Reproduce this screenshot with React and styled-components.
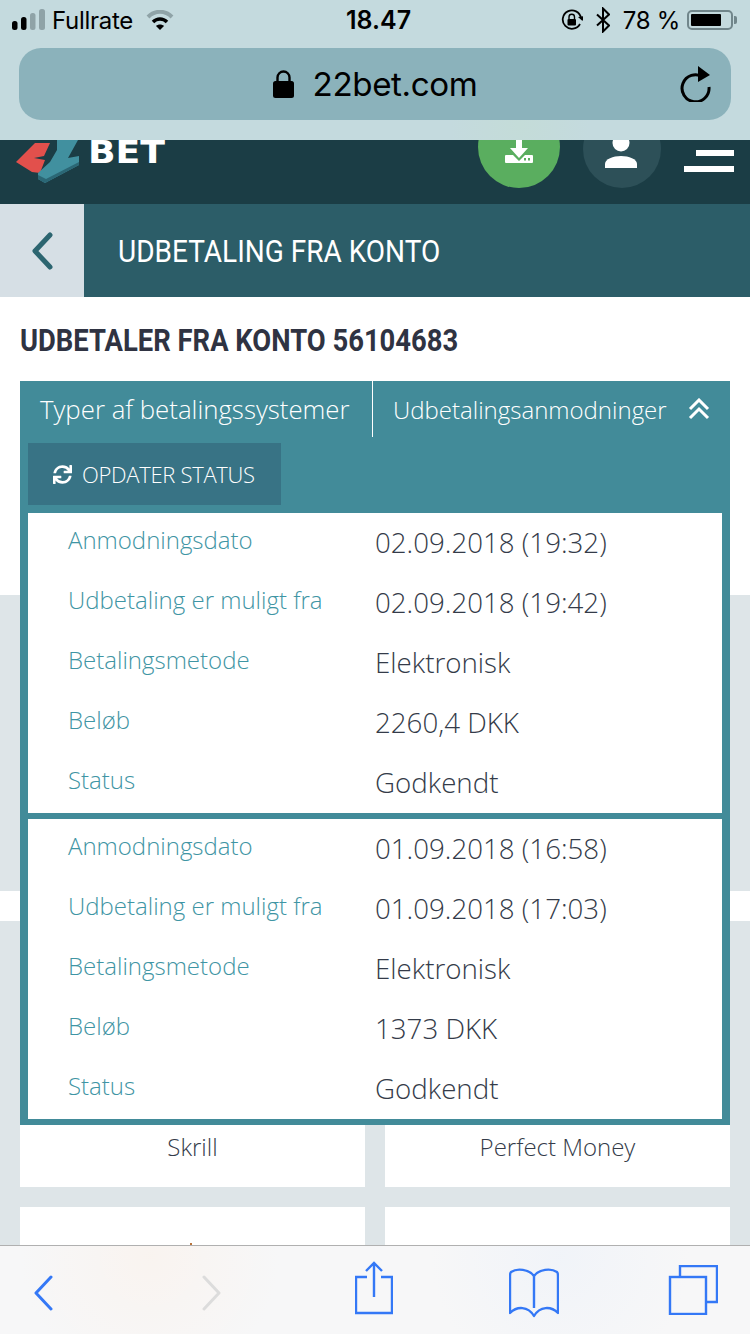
import React from 'react'
import styled, { createGlobalStyle } from 'styled-components'
import { FaSync } from 'react-icons/fa'

const requests = [
  [
    ['Anmodningsdato', '02.09.2018 (19:32)'],
    ['Udbetaling er muligt fra', '02.09.2018 (19:42)'],
    ['Betalingsmetode', 'Elektronisk'],
    ['Beløb', '2260,4 DKK'],
    ['Status', 'Godkendt'],
  ],
  [
    ['Anmodningsdato', '01.09.2018 (16:58)'],
    ['Udbetaling er muligt fra', '01.09.2018 (17:03)'],
    ['Betalingsmetode', 'Elektronisk'],
    ['Beløb', '1373 DKK'],
    ['Status', 'Godkendt'],
  ],
]

const App = () => {
  return (
    <Page>
      <GlobalStyle />
      <Chrome>
        <StatusBar>
          <StatusLeft>
            <svg width="34" height="22" viewBox="0 0 34 22">
              <rect x="0" y="12" width="5.5" height="9" rx="2.5" fill="#000" />
              <rect x="9" y="8" width="5.5" height="13" rx="2.5" fill="#000" />
              <rect x="18" y="4" width="5.5" height="17" rx="2.5" fill="#8fa3a7" />
              <rect x="27" y="0" width="6" height="21" rx="2.5" fill="#8fa3a7" />
            </svg>
            <StatusText>Fullrate</StatusText>
            <WifiIcon width="28" height="20" viewBox="0 0 28 20">
              <path d="M2 7 C9 0 19 0 26 7" fill="none" stroke="#8fa3a7" strokeWidth="4" />
              <path d="M7 12 C11 8 17 8 21 12" fill="none" stroke="#000" strokeWidth="3.5" />
              <path d="M10 16 L14 20 L18 16 C16 14 12 14 10 16 Z" fill="#000" />
            </WifiIcon>
          </StatusLeft>
          <Clock>18.47</Clock>
          <StatusRight>
            <svg width="22" height="22" viewBox="0 0 22 22">
              <path d="M19 15 A9.2 9.2 0 1 1 20 9" fill="none" stroke="#000" strokeWidth="1.8" />
              <path d="M17 8 L21.5 12 L23 7 Z" fill="#000" />
              <rect x="6.5" y="10" width="8.5" height="6.5" rx="1" fill="#000" />
              <path d="M8 10 V8 A2.7 2.7 0 0 1 13.5 8 V10" fill="none" stroke="#000" strokeWidth="1.4" />
            </svg>
            <svg width="14" height="26" viewBox="0 0 14 26">
              <path d="M1 7.5 L13 18.5 L7 24.5 V1.5 L13 7.5 L1 18.5" fill="none" stroke="#000" strokeWidth="2" />
            </svg>
            <StatusText>78 %</StatusText>
            <Battery>
              <BatteryFill />
            </Battery>
          </StatusRight>
        </StatusBar>
        <UrlBar>
          <svg width="21" height="28" viewBox="0 0 21 28">
            <path d="M4.5 13 V7.5 A6 6 0 0 1 16.5 7.5 V13" fill="none" stroke="#000" strokeWidth="2.4" />
            <rect x="0" y="11" width="21" height="17" rx="2.5" fill="#000" />
          </svg>
          <UrlText>22bet.com</UrlText>
          <ReloadIcon width="32" height="36" viewBox="0 0 32 36">
            <path d="M23 10 A13.5 13.5 0 1 0 29 20" fill="none" stroke="#000" strokeWidth="3" transform="translate(0 1)" />
            <path d="M18 0 L30 9 L18 16 Z" fill="#000" />
          </ReloadIcon>
        </UrlBar>
      </Chrome>

      <Header>
        <Logo width="160" height="70" viewBox="10 113 160 70">
          <path d="M16 162 L35 143 L50 143 L44 156 L34 158 L45 160 L40 173 L32 172 Z" fill="#e2504c" />
          <path d="M57 140 L78 140 L68 158 L79 156 L79 165 L45 183 L38 179 L38 173 L50 162 L57 150 Z" fill="#41909f" />
          <path d="M38 175 L46 179 L79 162 L79 165 L45 183 L38 179 Z" fill="#2b6775" />
          <text x="88" y="163" fontFamily="'DejaVu Sans', sans-serif" fontWeight="700" fontSize="32" fill="#fff" textLength="77" lengthAdjust="spacingAndGlyphs">BET</text>
        </Logo>
        <RoundButton $size={82} $bg="#5aae5f" $top={32}>
          <svg width="28" height="34" viewBox="0 0 28 34">
            <path d="M11 0 H17 V10 H23 L14 20 L5 10 H11 Z" fill="#fff" />
            <path d="M1 17 H8 L14 23 L20 17 H27 Q28 17 28 18 V24 Q28 25 27 25 H1 Q0 25 0 24 V18 Q0 17 1 17 Z" fill="#fff" />
            <rect x="19" y="20" width="2" height="2.5" fill="#5aae5f" />
            <rect x="23" y="20" width="2" height="2.5" fill="#5aae5f" />
          </svg>
        </RoundButton>
        <RoundButton $size={78} $bg="#2d5058" $gap={23} $top={25}>
          <UserIcon width="32" height="36" viewBox="0 0 32 36">
            <circle cx="16" cy="8" r="8.5" fill="#fff" />
            <path d="M0 33 V29 C0 24 8 21 16 21 C24 21 32 24 32 29 V33 Z" fill="#fff" />
          </UserIcon>
        </RoundButton>
        <Burger>
          <BurgerLine $width={38} />
          <BurgerLine $width={50} />
        </Burger>
      </Header>

      <TitleBar>
        <BackBox>
          <svg width="24" height="38" viewBox="0 0 24 38">
            <path d="M20 3 L5 19 L20 35" fill="none" stroke="#2c6570" strokeWidth="5" strokeLinecap="round" strokeLinejoin="round" />
          </svg>
        </BackBox>
        <TitleText>UDBETALING FRA KONTO</TitleText>
      </TitleBar>

      <Section>
        <Heading>UDBETALER FRA KONTO 56104683</Heading>
        <Panel>
          <Tabs>
            <TabFirst>Typer af betalingssystemer</TabFirst>
            <TabSecond>
              <span>Udbetalingsanmodninger</span>
              <svg width="22" height="22" viewBox="0 0 22 22">
                <path d="M2 11 L11 2 L20 11 M2 20 L11 11 L20 20" fill="none" stroke="#fff" strokeWidth="3" />
              </svg>
            </TabSecond>
          </Tabs>
          <RefreshButton>
            <FaSync size={19} />
            OPDATER STATUS
          </RefreshButton>
          {requests.map((request, i) => (
            <RequestBox key={i}>
              {request.map(([label, value]) => (
                <Row key={label}>
                  <Label>{label}</Label>
                  <Value>{value}</Value>
                </Row>
              ))}
            </RequestBox>
          ))}
        </Panel>
      </Section>

      <GreyBand />
      <WhiteGap />

      <CardGrid>
        <Card>Skrill</Card>
        <Card>Perfect Money</Card>
        <Card $low>
          <Speck />
        </Card>
        <Card $low />
      </CardGrid>

      <Toolbar>
        <ToolIcon width="20" height="36" viewBox="0 0 20 36" $left={33} $top={29}>
          <path d="M18 2 L3 18 L18 34" fill="none" stroke="#3478f6" strokeWidth="3" strokeLinecap="round" strokeLinejoin="round" />
        </ToolIcon>
        <ToolIcon width="20" height="36" viewBox="0 0 20 36" $left={149} $top={29}>
          <path d="M2 2 L17 18 L2 34" fill="none" stroke="#dcdcdc" strokeWidth="3" strokeLinecap="round" strokeLinejoin="round" />
        </ToolIcon>
        <ToolIcon width="38" height="54" viewBox="0 0 38 54" $left={133} $top={15}>
          <path d="M12 16 H1 V52 H37 V16 H26" fill="none" stroke="#3478f6" strokeWidth="2.4" />
          <path d="M19 36 V2 M11 10 L19 2 L27 10" fill="none" stroke="#3478f6" strokeWidth="2.4" />
        </ToolIcon>
        <ToolIcon width="50" height="50" viewBox="0 0 50 50" $left={116} $top={22}>
          <path d="M25 8 C20 1 8 0 2 4 C1 5 1 6 1 8 V45 C8 38 19 38 25 48 C31 38 42 38 49 45 V8 C49 6 49 5 48 4 C42 0 30 1 25 8 V40" fill="none" stroke="#3478f6" strokeWidth="2.4" strokeLinejoin="round" />
        </ToolIcon>
        <ToolIcon width="50" height="50" viewBox="0 0 50 50" $left={109} $top={19}>
          <path d="M12 11 V1 H49 V37 H39" fill="none" stroke="#3478f6" strokeWidth="2.4" />
          <rect x="2" y="12" width="36" height="37" fill="none" stroke="#3478f6" strokeWidth="2.4" />
        </ToolIcon>
      </Toolbar>
    </Page>
  )
}

export default App

const GlobalStyle = createGlobalStyle`
  html, body {
    margin: 0;
    padding: 0;
    background: #fff;
  }
  body {
    font-family: "Open Sans", sans-serif;
  }
`

const Page = styled.div`
  position: relative;
  width: 750px;
  height: 1334px;
  overflow: hidden;
  background: #dee5e8;
`

const Chrome = styled.div`
  height: 140px;
  box-sizing: border-box;
  background: radial-gradient(circle at 520px 125px, #c4dcd8 0, #c4dade 70px), #c4dade;
  padding: 0 19px;
`

const StatusBar = styled.div`
  height: 48px;
  box-sizing: border-box;
  padding-bottom: 8px;
  margin: 0 -7px;
  display: grid;
  grid-template-columns: 334px auto 1fr;
  align-items: center;
  font-family: Inter, "Liberation Sans", sans-serif;
  color: #000;
`

const StatusLeft = styled.div`
  display: flex;
  align-items: center;
  gap: 6px;
`

const StatusRight = styled.div`
  display: flex;
  align-items: center;
  justify-content: flex-end;
  gap: 13px;
`

const StatusText = styled.span`
  font-size: 24px;
  letter-spacing: -0.3px;
`

const WifiIcon = styled.svg`
  margin-left: 7px;
`

const Clock = styled.span`
  font-size: 25px;
  font-weight: 600;
`

const Battery = styled.div`
  position: relative;
  width: 46px;
  height: 20px;
  box-sizing: border-box;
  margin-left: -6px;
  margin-right: 5px;
  border: 2px solid #71868b;
  border-radius: 5px;
  padding: 2px;
  &::after {
    content: '';
    position: absolute;
    right: -6px;
    top: 4px;
    width: 3px;
    height: 8px;
    background: #71868b;
    border-radius: 0 2px 2px 0;
  }
`

const BatteryFill = styled.div`
  width: 78%;
  height: 100%;
  background: #000;
  border-radius: 1px;
`

const UrlBar = styled.div`
  position: relative;
  height: 72px;
  border-radius: 22px;
  background: #8bb2bb;
  display: flex;
  align-items: center;
  justify-content: center;
  gap: 19px;
`

const UrlText = styled.span`
  font-family: Inter, "Liberation Sans", sans-serif;
  font-size: 33.2px;
  letter-spacing: -0.4px;
  color: #000;
`

const ReloadIcon = styled.svg`
  position: absolute;
  right: 19px;
  top: 18px;
`

const Header = styled.div`
  height: 64px;
  box-sizing: border-box;
  overflow: hidden;
  background: #1b3d45;
  display: flex;
  align-items: flex-end;
  padding: 0 16px 16px 0;
`

const Logo = styled.svg`
  flex: none;
  margin-left: 10px;
  margin-bottom: 5px;
  margin-right: auto;
`

const RoundButton = styled.div`
  flex: none;
  width: ${(p) => p.$size}px;
  height: ${(p) => p.$size}px;
  margin-left: ${(p) => p.$gap || 0}px;
  border-radius: 50%;
  background: ${(p) => p.$bg};
  display: flex;
  align-items: flex-start;
  justify-content: center;
  padding-top: ${(p) => p.$top}px;
  box-sizing: border-box;
`

const UserIcon = styled.svg`
  margin-left: -2px;
`

const Burger = styled.div`
  flex: none;
  width: 50px;
  margin-left: 23px;
  margin-bottom: 16px;
  display: flex;
  flex-direction: column;
  align-items: flex-end;
  gap: 10px;
`

const BurgerLine = styled.div`
  width: ${(p) => p.$width}px;
  height: 6px;
  background: #fff;
`

const TitleBar = styled.div`
  height: 93px;
  display: flex;
  align-items: center;
  background: #2c5d68;
`

const BackBox = styled.div`
  width: 84px;
  height: 100%;
  background: #d6dfe5;
  display: flex;
  align-items: center;
  justify-content: center;
  padding-right: 1px;
  box-sizing: border-box;
`

const TitleText = styled.h1`
  margin: 0 0 0 34px;
  font-family: Roboto, "Liberation Sans", sans-serif;
  font-weight: 400;
  font-size: 32px;
  color: #fff;
  white-space: nowrap;
  transform: scaleX(0.875);
  transform-origin: left center;
`

const Section = styled.div`
  position: relative;
  height: 298px;
  box-sizing: border-box;
  background: #fff;
  padding: 24px 20px 0;
`

const Heading = styled.h2`
  margin: 0;
  font-family: Roboto, "Liberation Sans", sans-serif;
  font-weight: 700;
  font-size: 32px;
  line-height: 38px;
  color: #2f3342;
  white-space: nowrap;
  transform: scaleX(0.856);
  transform-origin: left center;
`

const Panel = styled.div`
  position: absolute;
  z-index: 2;
  top: 84px;
  left: 20px;
  right: 20px;
  background: #428b99;
  padding-bottom: 6px;
`

const Tabs = styled.div`
  display: flex;
  height: 56px;
  color: #fff;
  font-weight: 300;
`

const TabFirst = styled.div`
  width: 353px;
  box-sizing: border-box;
  padding-left: 20px;
  border-right: 1px solid #fff;
  font-size: 25.8px;
  line-height: 56px;
  white-space: nowrap;
`

const TabSecond = styled.div`
  flex: 1;
  display: flex;
  align-items: center;
  justify-content: space-between;
  padding: 0 20px 0 20px;
  font-size: 24px;
  white-space: nowrap;
`

const RefreshButton = styled.div`
  display: flex;
  align-items: center;
  gap: 10px;
  width: 253px;
  height: 62px;
  box-sizing: border-box;
  margin: 6px 0 8px 8px;
  padding-left: 25px;
  background: #387385;
  color: #fff;
  font-size: 22px;
  font-weight: 300;
  letter-spacing: -0.3px;
  white-space: nowrap;
`

const RequestBox = styled.div`
  margin: 0 8px;
  background: #fff;
  & + & {
    margin-top: 6px;
  }
`

const Row = styled.div`
  height: 60px;
  display: grid;
  grid-template-columns: 307px 1fr;
  padding-left: 40px;
`

const Label = styled.div`
  font-size: 24px;
  font-weight: 300;
  line-height: 54px;
  color: #3f95a4;
  white-space: nowrap;
`

const Value = styled.div`
  font-size: 27.7px;
  font-weight: 300;
  line-height: 58px;
  color: #343b49;
  white-space: nowrap;
`

const GreyBand = styled.div`
  height: 296px;
  background: #dee5e8;
`

const WhiteGap = styled.div`
  height: 30px;
  background: #fff;
`

const CardGrid = styled.div`
  display: grid;
  grid-template-columns: 345px 345px;
  grid-auto-rows: 246px;
  gap: 20px;
  padding: 20px 20px 0;
`

const Card = styled.div`
  background: #fff;
  box-sizing: border-box;
  height: ${(p) => (p.$low ? '200px' : '246px')};
  padding-top: ${(p) => (p.$low ? 36 : 191)}px;
  text-align: center;
  font-size: 24px;
  font-weight: 300;
  line-height: 30px;
  color: #343b49;
`

const Speck = styled.div`
  width: 2px;
  height: 3px;
  margin: 0 auto;
  transform: translateX(-2px);
  background: #b9743c;
`

const Toolbar = styled.div`
  position: absolute;
  z-index: 3;
  left: 0;
  right: 0;
  bottom: 0;
  height: 89px;
  box-sizing: border-box;
  border-top: 1px solid #b0b0b0;
  background:
    radial-gradient(circle at 150px 10px, rgba(255, 236, 220, 0.3) 0, rgba(255, 236, 220, 0) 130px),
    radial-gradient(circle at 560px 10px, rgba(226, 236, 250, 0.3) 0, rgba(226, 236, 250, 0) 130px),
    #f7f7f8;
  display: flex;
  align-items: flex-start;
`

const ToolIcon = styled.svg`
  flex: none;
  margin-left: ${(p) => p.$left}px;
  margin-top: ${(p) => p.$top}px;
`
